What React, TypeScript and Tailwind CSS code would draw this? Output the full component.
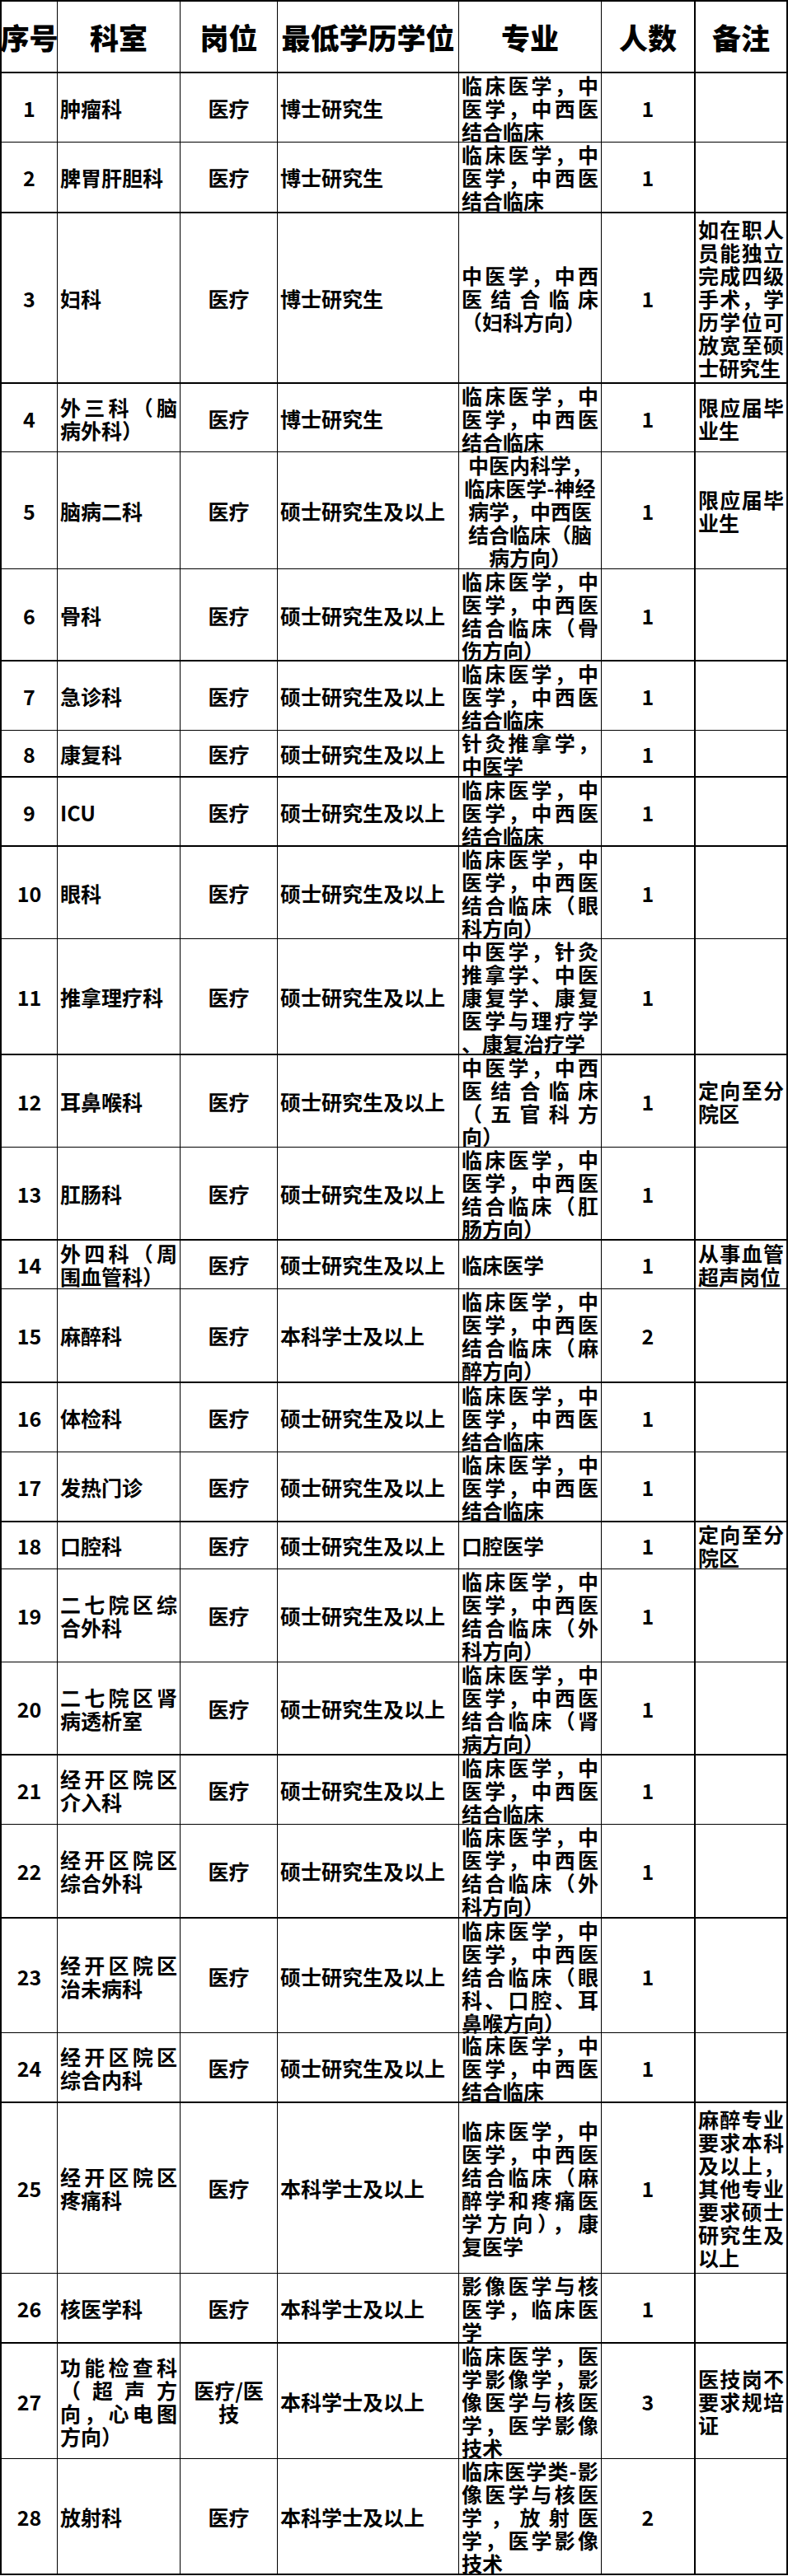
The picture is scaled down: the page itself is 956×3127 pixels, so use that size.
import React from "react";

type Row = {
  n: string;
  cls: string;
  dept: string[];
  pos: string[];
  edu: string;
  major: string[];
  majorCenter?: boolean;
  cnt: string;
  note: string[];
};

const STD = ["临床医学，中", "医学，中西医", "结合临床"];
const withDir = (a: string, b: string) => ["临床医学，中", "医学，中西医", a, b];

const rows: Row[] = [
  { n: "1", cls: "h-[84px] border-b", dept: ["肿瘤科"], pos: ["医疗"], edu: "博士研究生", major: STD, cnt: "1", note: [] },
  { n: "2", cls: "h-[86px] border-b-2", dept: ["脾胃肝胆科"], pos: ["医疗"], edu: "博士研究生", major: STD, cnt: "1", note: [] },
  {
    n: "3", cls: "h-[207px] border-b-2", dept: ["妇科"], pos: ["医疗"], edu: "博士研究生",
    major: ["中医学，中西", "医结合临床", "（妇科方向）"], cnt: "1",
    note: ["如在职人", "员能独立", "完成四级", "手术，学", "历学位可", "放宽至硕", "士研究生"],
  },
  { n: "4", cls: "h-[83px] border-b", dept: ["外三科（脑", "病外科）"], pos: ["医疗"], edu: "博士研究生", major: STD, cnt: "1", note: ["限应届毕", "业生"] },
  {
    n: "5", cls: "h-[142px] border-b", dept: ["脑病二科"], pos: ["医疗"], edu: "硕士研究生及以上",
    major: ["中医内科学，", "临床医学-神经", "病学，中西医", "结合临床（脑", "病方向）"], majorCenter: true, cnt: "1",
    note: ["限应届毕", "业生"],
  },
  { n: "6", cls: "h-[112px] border-b-2", dept: ["骨科"], pos: ["医疗"], edu: "硕士研究生及以上", major: withDir("结合临床（骨", "伤方向）"), cnt: "1", note: [] },
  { n: "7", cls: "h-[84px] border-b", dept: ["急诊科"], pos: ["医疗"], edu: "硕士研究生及以上", major: STD, cnt: "1", note: [] },
  { n: "8", cls: "h-[57px] border-b-2", dept: ["康复科"], pos: ["医疗"], edu: "硕士研究生及以上", major: ["针灸推拿学，", "中医学"], cnt: "1", note: [] },
  { n: "9", cls: "h-[84px] border-b-2", dept: ["ICU"], pos: ["医疗"], edu: "硕士研究生及以上", major: STD, cnt: "1", note: [] },
  { n: "10", cls: "h-[112px] border-b", dept: ["眼科"], pos: ["医疗"], edu: "硕士研究生及以上", major: withDir("结合临床（眼", "科方向）"), cnt: "1", note: [] },
  {
    n: "11", cls: "h-[141px] border-b-2", dept: ["推拿理疗科"], pos: ["医疗"], edu: "硕士研究生及以上",
    major: ["中医学，针灸", "推拿学、中医", "康复学、康复", "医学与理疗学", "、康复治疗学"], cnt: "1", note: [],
  },
  {
    n: "12", cls: "h-[112px] border-b", dept: ["耳鼻喉科"], pos: ["医疗"], edu: "硕士研究生及以上",
    major: ["中医学，中西", "医结合临床", "（五官科方", "向）"], cnt: "1", note: ["定向至分", "院区"],
  },
  { n: "13", cls: "h-[113px] border-b-2", dept: ["肛肠科"], pos: ["医疗"], edu: "硕士研究生及以上", major: withDir("结合临床（肛", "肠方向）"), cnt: "1", note: [] },
  { n: "14", cls: "h-[59px] border-b", dept: ["外四科（周", "围血管科）"], pos: ["医疗"], edu: "硕士研究生及以上", major: ["临床医学"], cnt: "1", note: ["从事血管", "超声岗位"] },
  { n: "15", cls: "h-[114px] border-b-2", dept: ["麻醉科"], pos: ["医疗"], edu: "本科学士及以上", major: withDir("结合临床（麻", "醉方向）"), cnt: "2", note: [] },
  { n: "16", cls: "h-[84px] border-b", dept: ["体检科"], pos: ["医疗"], edu: "硕士研究生及以上", major: STD, cnt: "1", note: [] },
  { n: "17", cls: "h-[85px] border-b-2", dept: ["发热门诊"], pos: ["医疗"], edu: "硕士研究生及以上", major: STD, cnt: "1", note: [] },
  { n: "18", cls: "h-[57px] border-b", dept: ["口腔科"], pos: ["医疗"], edu: "硕士研究生及以上", major: ["口腔医学"], cnt: "1", note: ["定向至分", "院区"] },
  { n: "19", cls: "h-[113px] border-b", dept: ["二七院区综", "合外科"], pos: ["医疗"], edu: "硕士研究生及以上", major: withDir("结合临床（外", "科方向）"), cnt: "1", note: [] },
  { n: "20", cls: "h-[113px] border-b-2", dept: ["二七院区肾", "病透析室"], pos: ["医疗"], edu: "硕士研究生及以上", major: withDir("结合临床（肾", "病方向）"), cnt: "1", note: [] },
  { n: "21", cls: "h-[84px] border-b", dept: ["经开区院区", "介入科"], pos: ["医疗"], edu: "硕士研究生及以上", major: STD, cnt: "1", note: [] },
  { n: "22", cls: "h-[114px] border-b-2", dept: ["经开区院区", "综合外科"], pos: ["医疗"], edu: "硕士研究生及以上", major: withDir("结合临床（外", "科方向）"), cnt: "1", note: [] },
  {
    n: "23", cls: "h-[139px] border-b", dept: ["经开区院区", "治未病科"], pos: ["医疗"], edu: "硕士研究生及以上",
    major: ["临床医学，中", "医学，中西医", "结合临床（眼", "科、口腔、耳", "鼻喉方向）"], cnt: "1", note: [],
  },
  { n: "24", cls: "h-[85px] border-b-2", dept: ["经开区院区", "综合内科"], pos: ["医疗"], edu: "硕士研究生及以上", major: STD, cnt: "1", note: [] },
  {
    n: "25", cls: "h-[207px] border-b", dept: ["经开区院区", "疼痛科"], pos: ["医疗"], edu: "本科学士及以上",
    major: ["临床医学，中", "医学，中西医", "结合临床（麻", "醉学和疼痛医", "学方向），康", "复医学"], cnt: "1",
    note: ["麻醉专业", "要求本科", "及以上，", "其他专业", "要求硕士", "研究生及", "以上"],
  },
  { n: "26", cls: "h-[85px] border-b-2", dept: ["核医学科"], pos: ["医疗"], edu: "本科学士及以上", major: ["影像医学与核", "医学，临床医", "学"], cnt: "1", note: [] },
  {
    n: "27", cls: "h-[140px] border-b", dept: ["功能检查科", "（超声方", "向，心电图", "方向）"], pos: ["医疗/医", "技"], edu: "本科学士及以上",
    major: ["临床医学，医", "学影像学，影", "像医学与核医", "学，医学影像", "技术"], cnt: "3",
    note: ["医技岗不", "要求规培", "证"],
  },
  {
    n: "28", cls: "h-[141px] border-b-2", dept: ["放射科"], pos: ["医疗"], edu: "本科学士及以上",
    major: ["临床医学类-影", "像医学与核医", "学，放射医", "学，医学影像", "技术"], cnt: "2", note: [],
  },
];

function Lines({ lines, center }: { lines: string[]; center?: boolean }) {
  return (
    <div className="w-full">
      {lines.map((l, i) => (
        <div
          key={i}
          className={
            center
              ? "text-center"
              : i < lines.length - 1
              ? "text-justify [text-align-last:justify]"
              : "text-left"
          }
        >
          {l}
        </div>
      ))}
    </div>
  );
}

const GRID = "grid grid-cols-[68px_149px_118px_220px_173px_114px_112px] border-black";

export default function App() {
  return (
    <div className="w-[956px] min-h-[3127px] bg-white text-black font-['Noto_Sans_CJK_SC','Noto_Sans_CJK_JP',sans-serif]">
      <div className="border-t-2 border-l-2 border-black">
        <div className={`${GRID} h-[87px] border-b-2 text-[35px] font-black leading-none whitespace-nowrap`}>
          <div className="flex items-center justify-center border-r border-black">序号</div>
          <div className="flex items-center justify-center border-r border-black">科室</div>
          <div className="flex items-center justify-center border-r border-black">岗位</div>
          <div className="flex items-center justify-center border-r border-black">最低学历学位</div>
          <div className="flex items-center justify-center border-r border-black">专业</div>
          <div className="flex items-center justify-center border-r-2 border-black">人数</div>
          <div className="flex items-center justify-center border-r-2 border-black">备注</div>
        </div>
        {rows.map((r) => (
          <div key={r.n} className={`${GRID} ${r.cls} text-[25px] font-bold leading-[28px]`}>
            <div className="flex items-center justify-center border-r border-black">{r.n}</div>
            <div className="flex items-center border-r border-black px-[3px]">
              <Lines lines={r.dept} />
            </div>
            <div className="flex items-center justify-center border-r border-black">
              <Lines lines={r.pos} center />
            </div>
            <div className="flex items-center border-r border-black px-[3px] whitespace-nowrap">{r.edu}</div>
            <div className="flex items-center border-r border-black px-[3px]">
              <Lines lines={r.major} center={r.majorCenter} />
            </div>
            <div className="flex items-center justify-center border-r-2 border-black">{r.cnt}</div>
            <div className="flex items-center border-r-2 border-black px-[3px]">
              <Lines lines={r.note} />
            </div>
          </div>
        ))}
      </div>
    </div>
  );
}
